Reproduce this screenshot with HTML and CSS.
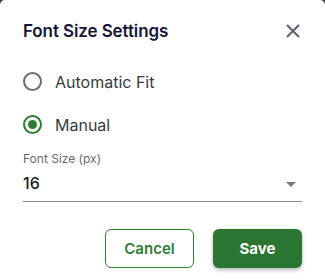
FILE: index.html
```html
<!DOCTYPE html>
<html>
<head>
<meta charset="utf-8">
<title>Font Size Settings</title>
<link rel="stylesheet" href="styles.css">
</head>
<body>
<div class="dialog">
  <div class="dialog_head">
    <h2 class="dialog_title">Font Size Settings</h2>
    <span class="dialog_close">
      <svg width="14" height="14" viewBox="0 0 14 14"><path d="M1 1L13 13M13 1L1 13" stroke="#5f5f6a" stroke-width="2" fill="none"/></svg>
    </span>
  </div>
  <ul class="radio_list">
    <li class="radio_item"><span class="radio"></span>Automatic Fit</li>
    <li class="radio_item"><span class="radio radio_on"></span>Manual</li>
  </ul>
  <div class="field">
    <div class="field_label">Font Size (px)</div>
    <div class="field_select">
      <span class="field_value">16</span>
      <span class="field_arrow"></span>
    </div>
  </div>
  <div class="dialog_foot">
    <button class="btn btn_outline">Cancel</button>
    <button class="btn btn_fill">Save</button>
  </div>
</div>
</body>
</html>
```

FILE: styles.css
```css
* { margin:0; padding:0; box-sizing:border-box;}
html{ background:#3a3a3a;}
body{ font-family:Inter, "Noto Sans", sans-serif; width:325px; height:280px;}
ul,li{ list-style:none;}
.dialog{ background:#fff; height:280px; border-radius:5px 5px 0 0; padding:18px 23px 0 23px;}
.dialog_head{ display:flex; justify-content:space-between; align-items:center; height:26px;}
.dialog_title{ font-size:17px; font-weight:600; color:#161538; letter-spacing:-0.1px;}
.dialog_close{ display:flex; margin-right:2px;}
.radio_list{ margin-top:16px;}
.radio_item{ display:flex; align-items:center; height:43px; font-size:16px; color:#3a3a3a; gap:13px;}
.radio{ width:19px; height:19px; border:2px solid #6b6b6b; border-radius:50%; display:flex; align-items:center; justify-content:center;}
.radio_on{ border-color:#2e7d32;}
.radio_on::after{ content:""; width:9px; height:9px; border-radius:50%; background:#2e7d32;}
.field{ margin-top:5px;}
.field_label{ font-size:12px; color:#6a6a6a; height:17px;}
.field_select{ display:flex; justify-content:space-between; align-items:flex-start; height:34px; padding-top:6px; border-bottom:1px solid #8a8a8a;}
.field_value{ font-size:16px; font-weight:500; color:#1a1a1a; line-height:19px;}
.field_arrow{ width:0; height:0; border-left:5px solid transparent; border-right:5px solid transparent; border-top:5px solid #777; margin:8px 6px 0 0;}
.dialog_foot{ display:flex; justify-content:flex-end; gap:19px; margin-top:27px;}
.btn{ width:89px; height:39px; border-radius:6px; font-family:Inter, sans-serif; font-size:15px; font-weight:600; cursor:pointer;}
.btn_outline{ background:#fff; border:1px solid #2e7d32; color:#2e7d32;}
.btn_fill{ background:#2b7533; border:none; color:#fff; font-weight:700; box-shadow:0 2px 4px rgba(0,0,0,0.3);}
```
